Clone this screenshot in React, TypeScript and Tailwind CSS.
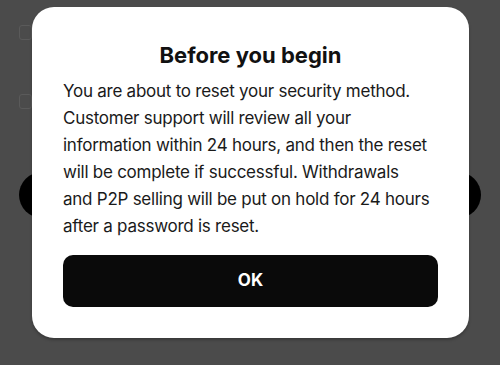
import React from "react";

const lines = [
  "You are about to reset your security method.",
  "Customer support will review all your",
  "information within 24 hours, and then the reset",
  "will be complete if successful. Withdrawals",
  "and P2P selling will be put on hold for 24 hours",
  "after a password is reset.",
];

const App = () => {
  return (
    <div className="relative h-[365px] w-[500px] overflow-hidden bg-[#4b4b4b] font-['Inter',sans-serif]">
      {/* page under the overlay */}
      <div className="flex flex-col px-[19px] pt-[25px]">
        <div className="h-[15px] w-[13px] rounded-[3px] border border-[#5a5a5a]" />
        <div className="mt-[54px] h-[15px] w-[13px] rounded-[3px] border border-[#5a5a5a]" />
        <div className="mt-[63px] h-[46px] w-full rounded-full bg-black" />
      </div>

      {/* modal */}
      <div className="absolute left-[32px] top-[7px] w-[437px] rounded-[22px] bg-white px-[31px] pb-[31px] pt-[34px] shadow-[0_2px_3px_rgba(0,0,0,0.25)]">
        <h2 className="text-center text-[22px] font-bold leading-[28px] text-[#111]">
          Before you begin
        </h2>
        <p className="mt-[9px] text-[17px] leading-[27px] tracking-[-0.25px] text-[#1a1a1a]">
          {lines.map((l) => (
            <span key={l} className="block whitespace-nowrap">
              {l}
            </span>
          ))}
        </p>
        <button className="mt-[15px] flex h-[52px] w-full items-center justify-center rounded-[10px] bg-[#0a0a0a] text-[17px] font-bold text-white">
          OK
        </button>
      </div>
    </div>
  );
};

export default App;
